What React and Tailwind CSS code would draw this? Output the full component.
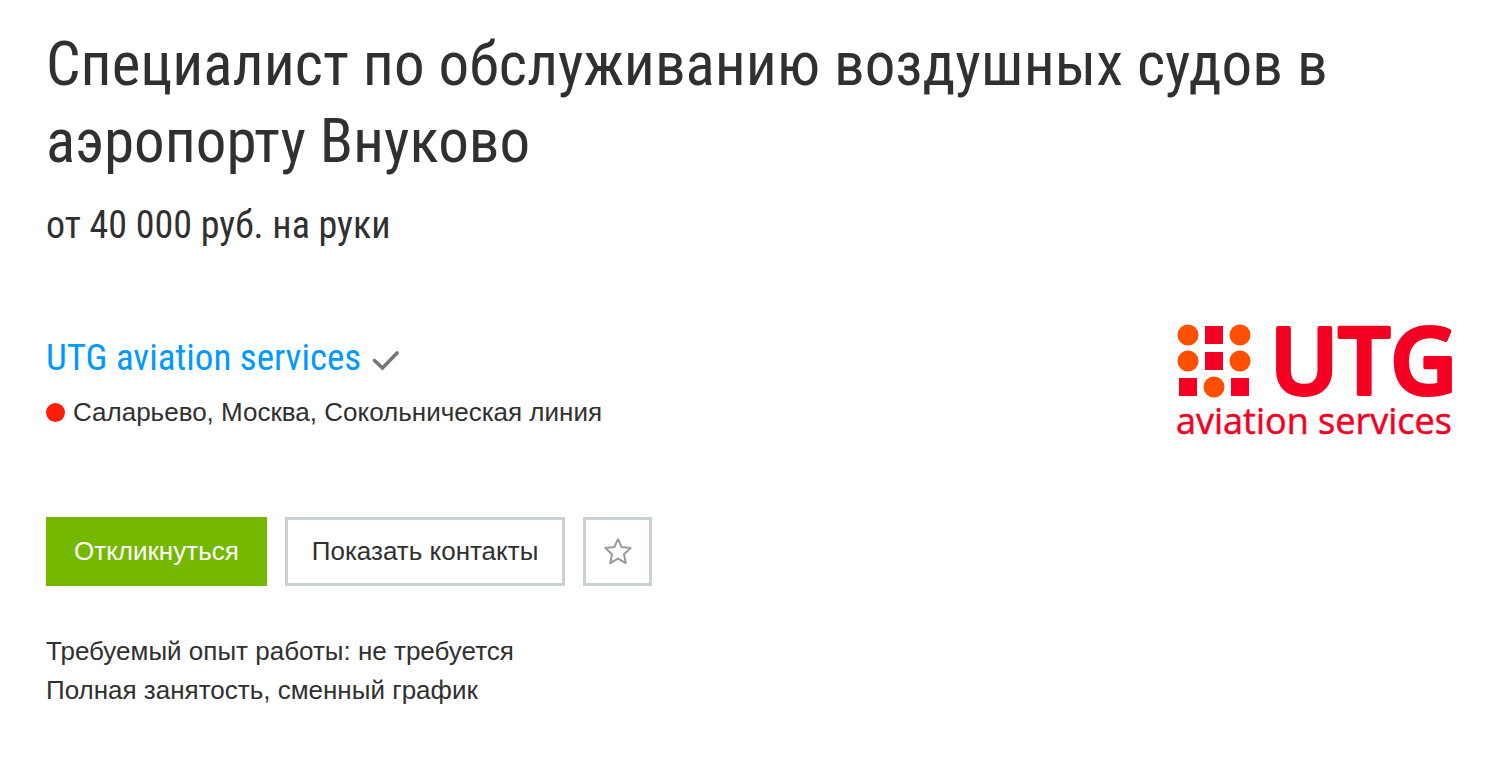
function Logo() {
  return (
    <svg
      className="h-[180px] w-[280px] shrink-0"
      viewBox="0 -40 280 180"
      role="img"
      aria-label="UTG aviation services"
    >
      <g fill="#ff4f00">
        <circle cx="14" cy="15" r="10.5" />
        <circle cx="66" cy="15" r="10.5" />
        <circle cx="14" cy="41" r="10.5" />
        <circle cx="66" cy="41" r="10.5" />
        <circle cx="40" cy="67" r="10.5" />
      </g>
      <g fill="#f50023">
        <rect x="31" y="6" width="18" height="18" />
        <rect x="31" y="32" width="18" height="18" />
        <rect x="5" y="58" width="18" height="18" />
        <rect x="57" y="58" width="18" height="18" />
      </g>
      <text
        x="96"
        y="74"
        fill="#f50023"
        stroke="#f50023"
        strokeWidth="4"
        strokeLinejoin="round"
        className="font-['Open_Sans',sans-serif] text-[92px] leading-none font-semibold"
      >
        UTG
      </text>
      <text
        x="2"
        y="114"
        fill="#f50023"
        stroke="#f50023"
        strokeWidth="0.5"
        className="font-['Open_Sans',sans-serif] text-[36px] leading-none"
      >
        aviation services
      </text>
    </svg>
  );
}

export default function App() {
  return (
    <main className="min-h-screen bg-white px-[46px] pt-[26px] pb-14 font-['Liberation_Sans',Arial,sans-serif] text-[26px] leading-[39px] text-[#303030]">
      <header className="font-['Roboto_Condensed','Roboto',sans-serif]">
        <h1 className="text-[61px] leading-[77px]">
          Специалист по обслуживанию воздушных судов в аэропорту Внуково
        </h1>
        <p className="mt-[22px] text-[38px] leading-[46px]">от 40 000 руб. на руки</p>
      </header>

      <section className="mt-8 flex items-start justify-between">
        <div className="mt-[55px]">
          <h2 className="flex items-center gap-[10px] font-['Roboto_Condensed','Roboto',sans-serif] text-[37px] leading-[46px]">
            <a href="#company" className="text-[#0099ff]">
              UTG aviation services
            </a>
            <svg className="mt-1 h-7 w-7" viewBox="0 0 28 28" fill="none" aria-hidden="true">
              <path
                d="M3.5 14.5 11.5 22 26 7"
                stroke="#777"
                strokeWidth="3.6"
                strokeLinecap="round"
              />
            </svg>
          </h2>
          <p className="mt-3 flex items-center gap-2">
            <span className="h-[19px] w-[19px] rounded-full bg-[#ff1e0a]" />
            Саларьево, Москва, Сокольническая линия
          </p>
        </div>
        <Logo />
      </section>

      <div className="mt-[57px] flex gap-[18px]">
        <button type="button" className="h-[69px] bg-[#74b800] px-7 text-white">
          Откликнуться
        </button>
        <button type="button" className="h-[69px] border-[3px] border-[#cad1d4] px-6">
          Показать контакты
        </button>
        <button
          type="button"
          aria-label="В избранное"
          className="flex h-[69px] w-[69px] items-center justify-center border-[3px] border-[#cad1d4]"
        >
          <svg className="h-7 w-7" viewBox="0 0 28 28" fill="none" aria-hidden="true">
            <path
              d="M14 1.2 17.6 9 26.6 10 20 16.2 21.8 25.2 14 20.7 6.2 25.2 8 16.2 1.4 10 10.4 9Z"
              stroke="#999"
              strokeWidth="2"
              strokeLinejoin="round"
            />
          </svg>
        </button>
      </div>

      <div className="mt-[46px]">
        <p>Требуемый опыт работы: не требуется</p>
        <p>Полная занятость, сменный график</p>
      </div>
    </main>
  );
}
